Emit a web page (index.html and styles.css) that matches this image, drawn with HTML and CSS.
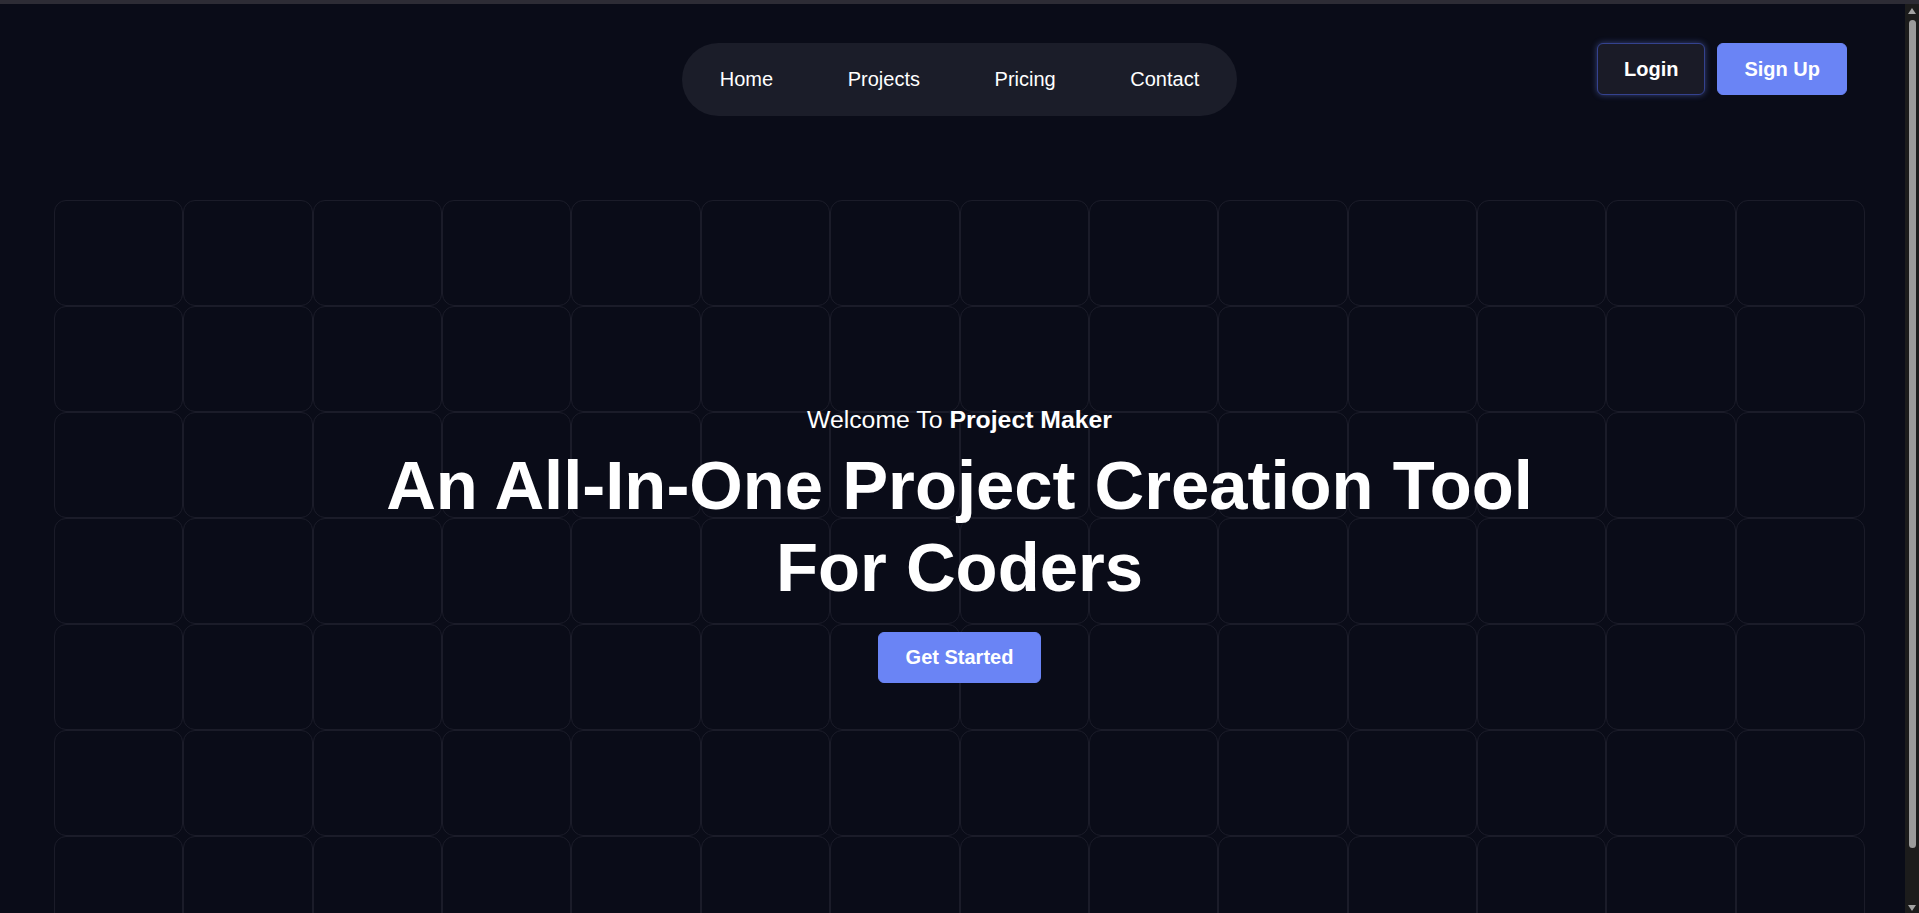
FILE: index.html
```html
<!DOCTYPE html>
<html lang="en">
<head>
<meta charset="utf-8">
<title>Project Maker</title>
<link rel="stylesheet" href="styles.css">
</head>
<body>
<div class="topbar"></div>
<header class="header">
  <div class="logo"></div>
  <nav class="nav">
    <a class="nav-link" href="#">Home</a>
    <a class="nav-link" href="#">Projects</a>
    <a class="nav-link" href="#">Pricing</a>
    <a class="nav-link" href="#">Contact</a>
  </nav>
  <div class="auth">
    <button class="btn btn-login">Login</button>
    <button class="btn btn-primary">Sign Up</button>
  </div>
</header>
<main class="hero">
  <div class="grid">
    <div class="cell"></div><div class="cell"></div><div class="cell"></div><div class="cell"></div><div class="cell"></div><div class="cell"></div><div class="cell"></div><div class="cell"></div><div class="cell"></div><div class="cell"></div><div class="cell"></div><div class="cell"></div><div class="cell"></div><div class="cell"></div>
    <div class="cell"></div><div class="cell"></div><div class="cell"></div><div class="cell"></div><div class="cell"></div><div class="cell"></div><div class="cell"></div><div class="cell"></div><div class="cell"></div><div class="cell"></div><div class="cell"></div><div class="cell"></div><div class="cell"></div><div class="cell"></div>
    <div class="cell"></div><div class="cell"></div><div class="cell"></div><div class="cell"></div><div class="cell"></div><div class="cell"></div><div class="cell"></div><div class="cell"></div><div class="cell"></div><div class="cell"></div><div class="cell"></div><div class="cell"></div><div class="cell"></div><div class="cell"></div>
    <div class="cell"></div><div class="cell"></div><div class="cell"></div><div class="cell"></div><div class="cell"></div><div class="cell"></div><div class="cell"></div><div class="cell"></div><div class="cell"></div><div class="cell"></div><div class="cell"></div><div class="cell"></div><div class="cell"></div><div class="cell"></div>
    <div class="cell"></div><div class="cell"></div><div class="cell"></div><div class="cell"></div><div class="cell"></div><div class="cell"></div><div class="cell"></div><div class="cell"></div><div class="cell"></div><div class="cell"></div><div class="cell"></div><div class="cell"></div><div class="cell"></div><div class="cell"></div>
    <div class="cell"></div><div class="cell"></div><div class="cell"></div><div class="cell"></div><div class="cell"></div><div class="cell"></div><div class="cell"></div><div class="cell"></div><div class="cell"></div><div class="cell"></div><div class="cell"></div><div class="cell"></div><div class="cell"></div><div class="cell"></div>
    <div class="cell"></div><div class="cell"></div><div class="cell"></div><div class="cell"></div><div class="cell"></div><div class="cell"></div><div class="cell"></div><div class="cell"></div><div class="cell"></div><div class="cell"></div><div class="cell"></div><div class="cell"></div><div class="cell"></div><div class="cell"></div>
    <div class="cell"></div><div class="cell"></div><div class="cell"></div><div class="cell"></div><div class="cell"></div><div class="cell"></div><div class="cell"></div><div class="cell"></div><div class="cell"></div><div class="cell"></div><div class="cell"></div><div class="cell"></div><div class="cell"></div><div class="cell"></div>
  </div>
  <div class="hero-content">
    <p class="welcome">Welcome To <strong>Project Maker</strong></p>
    <h1 class="title">An All-In-One Project Creation Tool<br>For Coders</h1>
    <button class="btn btn-primary btn-start">Get Started</button>
  </div>
</main>
<div class="scrollbar" aria-hidden="true">
  <span class="sb-arrow sb-up"></span>
  <span class="sb-thumb"></span>
  <span class="sb-arrow sb-down"></span>
</div>
</body>
</html>
```

FILE: styles.css
```css
* { box-sizing: border-box; }

html, body {
  margin: 0;
  padding: 0;
  background: #0a0c18;
  color: #ffffff;
  font-family: "Liberation Sans", Arial, sans-serif;
}

.topbar {
  height: 4px;
  background: #2d2c35;
}

.header {
  display: grid;
  grid-template-columns: 1fr auto 1fr;
  align-items: start;
  padding: 39px 72px 0 72px;
}

.logo { height: 0; }

.nav {
  display: flex;
  align-items: center;
  height: 73px;
  background: #1b1d29;
  border-radius: 40px;
}

.nav-link {
  padding: 0 37.3px;
  color: #ffffff;
  text-decoration: none;
  font-size: 20px;
}

.auth {
  justify-self: end;
  display: flex;
  gap: 12px;
}

.btn {
  height: 52px;
  padding: 0 26px;
  border: 1px solid transparent;
  border-radius: 6px;
  color: #ffffff;
  font-family: "Liberation Sans", Arial, sans-serif;
  font-size: 20px;
  font-weight: 700;
  cursor: pointer;
}

.btn-login {
  background: #1a1b27;
  border-color: #34428f;
  box-shadow: 0 0 6px rgba(106, 132, 245, 0.45);
}

.btn-primary {
  background: #6a84f5;
  border-color: #6a84f5;
}

.hero {
  display: grid;
  margin-top: 84px;
  padding: 0 54px;
}

.grid,
.hero-content {
  grid-area: 1 / 1;
}

.grid {
  display: grid;
  grid-template-columns: repeat(14, 1fr);
  grid-auto-rows: 106px;
}

.cell {
  border: 1px solid #1b1c29;
  border-radius: 12px;
}

.hero-content {
  display: flex;
  flex-direction: column;
  align-items: center;
  padding-top: 206px;
  text-align: center;
}

.welcome {
  margin: 0;
  font-size: 24.8px;
}

.welcome strong { font-weight: 700; }

.title {
  margin: 11px 0 0;
  font-size: 68.8px;
  line-height: 1.19;
  font-weight: 700;
}

.btn-start {
  margin-top: 23px;
  height: 51px;
  padding: 0 26.5px;
}

/* browser scrollbar overlay seen in the screenshot */
.scrollbar {
  position: fixed;
  top: 4px;
  right: 0;
  bottom: 0;
  width: 14px;
  background: #1c1c1c;
  display: flex;
  flex-direction: column;
  align-items: center;
  padding: 4px 0 2px;
}

.sb-arrow {
  width: 0;
  height: 0;
  border-left: 4.5px solid transparent;
  border-right: 4.5px solid transparent;
}

.sb-up { border-bottom: 6px solid #a3a3a3; }
.sb-down { border-top: 6px solid #a3a3a3; margin-top: auto; }

.sb-thumb {
  width: 7px;
  height: 828px;
  margin-top: 6px;
  margin-left: 1px;
  background: #9b9b9b;
  border-radius: 4px;
}
```
